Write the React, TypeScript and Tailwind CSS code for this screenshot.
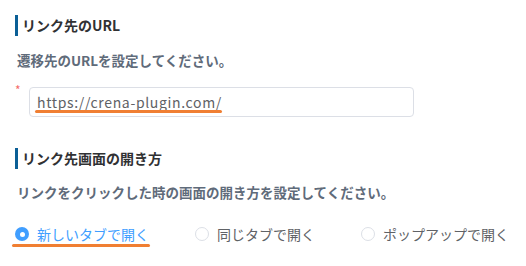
const font = { fontFamily: '"Noto Sans CJK JP", "Noto Sans", sans-serif' };

function Heading({ children }: { children: string }) {
  return (
    <h2 className="h-[21px] border-l-[3px] border-[#0b5f96] pl-[4px] text-[14px] font-bold leading-[21px] text-[#303133]">
      {children}
    </h2>
  );
}

function Radio({ label, checked }: { label: string; checked?: boolean }) {
  return (
    <label className="flex h-[20px] items-center">
      {checked ? (
        <span className="flex h-[14px] w-[14px] items-center justify-center rounded-full bg-[#409eff]">
          <span className="h-[5px] w-[5px] rounded-full bg-white" />
        </span>
      ) : (
        <span className="h-[14px] w-[14px] rounded-full border border-[#dcdfe6] bg-white" />
      )}
      <span className={`ml-[8px] text-[14px] leading-[20px] ${checked ? 'text-[#409eff]' : 'text-[#606266]'}`}>{label}</span>
    </label>
  );
}

export default function App() {
  return (
    <main style={font} className="h-[266px] w-[526px] overflow-hidden bg-white pl-[15px] pt-[15px]">
      <Heading>リンク先のURL</Heading>
      <p className="mt-[14px] pl-[2px] text-[13.5px] font-bold leading-[20px] text-[#5f6b7a]">遷移先のURLを設定してください。</p>

      <div className="mt-[17px] flex">
        <span className="mt-[-3px] w-[14px] text-[12px] leading-[12px] text-[#f56c6c]">*</span>
        <div className="relative h-[30px] w-[385px] rounded-[4px] border border-[#dcdfe6] px-[7px]">
          <span className="text-[14px] leading-[28px] tracking-[0.65px] text-[#606266]">https://crena-plugin.com/</span>
          <span className="absolute left-[5px] top-[22px] h-[3px] w-[187px] rounded-full bg-[#f07f33]" />
        </div>
      </div>

      <div className="mt-[31px]">
        <Heading>リンク先画面の開き方</Heading>
      </div>
      <p className="mt-[13px] pl-[2px] text-[13.5px] font-bold leading-[20px] text-[#5f6b7a]">
        リンクをクリックした時の画面の開き方を設定してください。
      </p>

      <div className="relative mt-[22px] flex gap-[46px]">
        <Radio label="新しいタブで開く" checked />
        <Radio label="同じタブで開く" />
        <Radio label="ポップアップで開く" />
        <span className="absolute left-[-3px] top-[20px] h-[3px] w-[138px] rounded-full bg-[#f07f33]" />
      </div>
    </main>
  );
}
